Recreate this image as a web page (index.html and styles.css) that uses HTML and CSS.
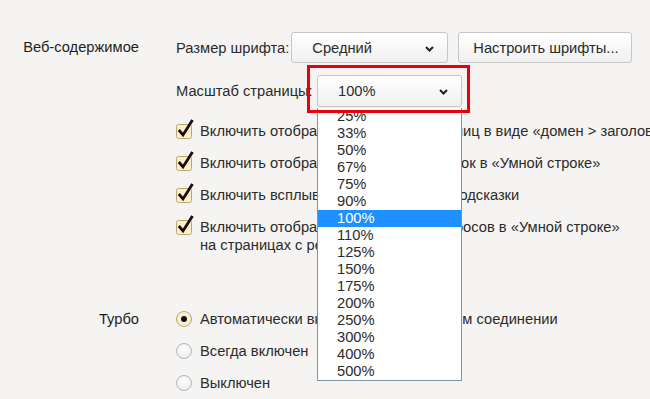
FILE: index.html
```html
<!DOCTYPE html>
<html lang="ru">
<head>
  <meta charset="UTF-8" />
  <title>Настройки</title>
  <link rel="stylesheet" href="styles.css">
</head>
<body>

  <div class="group" id="web">
    <div class="label label-top">Веб-содержимое</div>
    <div class="controls">
      <div class="line">
        <span class="caption">Размер шрифта:</span>
        <div class="select wide">Средний<svg class="chev" width="9" height="6" viewBox="0 0 9 6"><polyline points="1,1 4.5,4.5 8,1" fill="none" stroke="#222" stroke-width="2"/></svg></div>
        <button class="btn">Настроить шрифты...</button>
      </div>

      <div class="line second">
        <span class="caption">Масштаб страницы:</span>
        <div class="zoom-wrap">
          <div class="select narrow">100%<svg class="chev" width="9" height="6" viewBox="0 0 9 6"><polyline points="1,1 4.5,4.5 8,1" fill="none" stroke="#222" stroke-width="2"/></svg></div>
          <ul class="dropdown">
            <li>25%</li>
            <li>33%</li>
            <li>50%</li>
            <li>67%</li>
            <li>75%</li>
            <li>90%</li>
            <li class="active">100%</li>
            <li>110%</li>
            <li>125%</li>
            <li>150%</li>
            <li>175%</li>
            <li>200%</li>
            <li>250%</li>
            <li>300%</li>
            <li>400%</li>
            <li>500%</li>
          </ul>
          <div class="mark"></div>
        </div>
      </div>

      <div class="checks">
        <div class="check"><svg class="box" width="18" height="20" viewBox="0 0 18 20"><rect x="0.5" y="5.5" width="15" height="14" rx="2" fill="#fcefc4" stroke="#b9a978"/><polyline points="2.8,11 7,16 16.5,1" fill="none" stroke="#111" stroke-width="2.8"/></svg><span>Включить отображение адресов страниц в виде «домен &gt; заголовок»</span></div>
        <div class="check"><svg class="box" width="18" height="20" viewBox="0 0 18 20"><rect x="0.5" y="5.5" width="15" height="14" rx="2" fill="#fcefc4" stroke="#b9a978"/><polyline points="2.8,11 7,16 16.5,1" fill="none" stroke="#111" stroke-width="2.8"/></svg><span>Включить отображение быстрых ссылок в «Умной строке»</span></div>
        <div class="check"><svg class="box" width="18" height="20" viewBox="0 0 18 20"><rect x="0.5" y="5.5" width="15" height="14" rx="2" fill="#fcefc4" stroke="#b9a978"/><polyline points="2.8,11 7,16 16.5,1" fill="none" stroke="#111" stroke-width="2.8"/></svg><span>Включить всплывающие подробные подсказки</span></div>
        <div class="check"><svg class="box" width="18" height="20" viewBox="0 0 18 20"><rect x="0.5" y="5.5" width="15" height="14" rx="2" fill="#fcefc4" stroke="#b9a978"/><polyline points="2.8,11 7,16 16.5,1" fill="none" stroke="#111" stroke-width="2.8"/></svg><span>Включить отображение недавних запросов в «Умной строке»<br>на страницах с результатами поиска</span></div>
      </div>
    </div>
  </div>

  <div class="group" id="turbo">
    <div class="label">Турбо</div>
    <div class="radios">
      <div class="radio"><span class="dot on"></span>Автоматически включать на медленном соединении</div>
      <div class="radio"><span class="dot"></span>Всегда включен</div>
      <div class="radio"><span class="dot"></span>Выключен</div>
    </div>
  </div>

</body>
</html>
```

FILE: styles.css
```css
html, body {
  height: 100%;
}

body {
  background-color: #f5f4f2;
  font-family: 'Liberation Sans', Arial, sans-serif;
  font-size: 14.7px;
  color: #2b2b2b;
  margin: 0;
  padding: 32px 0 0 0;
  overflow: hidden;
}

.group {
  display: grid;
  grid-template-columns: 139px 1fr;
  column-gap: 37px;
  white-space: nowrap;
}

.label {
  text-align: right;
  color: #1e1e1e;
  line-height: 18px;
}

.label-top {
  line-height: 31px;
}

.controls {
  display: flex;
  flex-direction: column;
}

.line {
  display: flex;
  align-items: center;
  height: 31px;
}

.line.second {
  margin-top: 12px;
  height: 32px;
}

.caption {
  margin-right: 2px;
}

.line.second .caption {
  margin-right: 0;
  width: 141px;
}

.select, .btn {
  box-sizing: border-box;
  height: 31px;
  border: 1px solid #c6c6c6;
  border-radius: 3px;
  background: linear-gradient(#fff, #f1f0ef);
  font-family: inherit;
  font-size: 14.7px;
  color: #2b2b2b;
  display: flex;
  align-items: center;
}

.select {
  padding-left: 20px;
  position: relative;
}

.select.wide {
  width: 157px;
}

.select.narrow {
  width: 145px;
  height: 32px;
}

.chev {
  position: absolute;
  right: 13px;
  top: 13px;
}

.btn {
  margin-left: 10px;
  width: 174px;
  padding: 0 0 0 14px;
}

.zoom-wrap {
  position: relative;
}

.dropdown {
  position: absolute;
  top: 33px;
  left: 0;
  width: 145px;
  box-sizing: border-box;
  margin: 0;
  padding: 0;
  list-style: none;
  background: #fff;
  border: 1px solid #7f93ad;
  border-top: none;
  z-index: 5;
}

.dropdown li {
  height: 17px;
  line-height: 17px;
  padding-left: 19px;
}

.dropdown li.active {
  background: #1e90ff;
  color: #fff;
}

.mark {
  position: absolute;
  left: -10px;
  top: -10px;
  width: 163px;
  height: 48px;
  box-sizing: border-box;
  border: 3px solid #e8000b;
  z-index: 6;
}

.checks {
  display: flex;
  flex-direction: column;
  gap: 14px;
  margin-top: 15px;
}

.check {
  display: flex;
  align-items: flex-start;
  line-height: 18px;
}

.box {
  flex: none;
  margin: -3px 6px 0 0;
}

#turbo {
  margin-top: 56px;
}

.radios {
  display: flex;
  flex-direction: column;
  gap: 14px;
}

.radio {
  display: flex;
  align-items: center;
  line-height: 18px;
}

.dot {
  width: 14px;
  height: 14px;
  border: 1px solid #b5b5b5;
  border-radius: 50%;
  background: radial-gradient(circle at 50% 35%, #fff, #e6e6e6);
  margin-right: 8px;
  position: relative;
  flex: none;
}

.dot.on {
  border-color: #b9a978;
  background: radial-gradient(circle at 50% 40%, #fffbe8, #f3e4b0);
}

.dot.on::after {
  content: "";
  position: absolute;
  left: 4px;
  top: 4px;
  width: 6px;
  height: 6px;
  border-radius: 50%;
  background: #111;
}
```
